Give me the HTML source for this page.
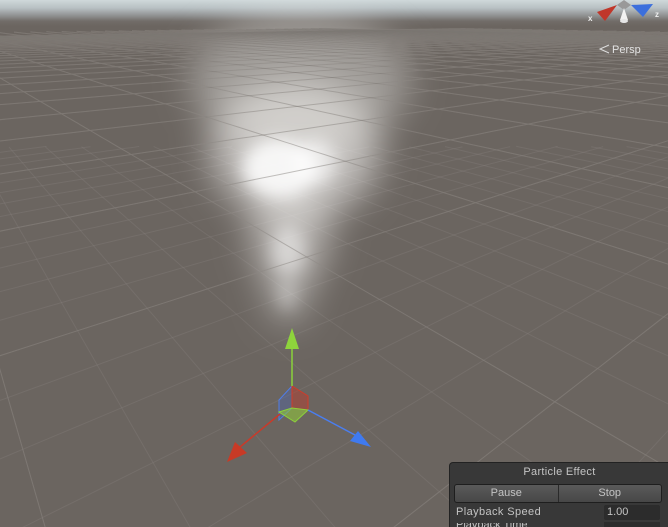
<!DOCTYPE html>
<html><head><meta charset="utf-8"><style>
html,body{margin:0;padding:0;width:668px;height:527px;overflow:hidden}
body{position:relative;background:#6b6560;font-family:"Liberation Sans",sans-serif}
#sky{position:absolute;left:0;top:0;width:668px;height:30px;background:linear-gradient(#cfd8da 0px,#b8c0c3 8px,#8e8f8f 16px,#726d69 21px,#6b6560 26px)}
svg{position:absolute;left:0;top:0}
#panel{position:absolute;left:449px;top:462px;width:219px;height:64px;overflow:hidden;background:#383838;border:1px solid #222;border-bottom:none;border-radius:4px 0 0 0;color:#c4c4c4;font-size:11px}
.title{position:absolute;left:0;width:219px;top:3px;text-align:center;letter-spacing:0.3px}
.btns{position:absolute;left:4px;top:21px;width:206px;height:17px;border:1px solid #1e1e1e;border-radius:3px;background:linear-gradient(#5a5a5a,#474747);display:flex}
.btns div{flex:1;text-align:center;line-height:17px}
.btns div+div{border-left:1px solid #2a2a2a}
.lab{position:absolute;left:6px;top:43px;letter-spacing:0.4px}
.fld{position:absolute;left:154px;top:42px;width:56px;height:15px;background:#2c2c2c;line-height:15px;padding-left:3px;box-sizing:border-box;border-radius:2px}
.lab2{position:absolute;left:6px;top:60px;line-height:4px;height:4px;overflow:hidden}
.fld2{position:absolute;left:154px;top:59px;width:56px;height:5px;background:#2c2c2c}
</style></head><body>
<div id="sky"></div>
<svg width="668" height="527">
<defs>
<filter id="b1" x="-50%" y="-50%" width="200%" height="200%"><feGaussianBlur stdDeviation="18"/></filter>
<filter id="b2" x="-50%" y="-50%" width="200%" height="200%"><feGaussianBlur stdDeviation="8"/></filter>
<radialGradient id="sky2" cx="0.5" cy="0" r="0.5"><stop offset="0" stop-color="#fff" stop-opacity="0.5"/><stop offset="1" stop-color="#fff" stop-opacity="0"/></radialGradient>
</defs>
<ellipse cx="330" cy="0" rx="200" ry="18" fill="url(#sky2)"/>
<g id="minor" fill="none" stroke="#8b8580" stroke-opacity="0.3" stroke-width="1"></g>
<g id="grid" fill="none" stroke="#8d8782" stroke-opacity="0.6" stroke-width="1"></g>
<g filter="url(#b1)" fill="#ecebe9">
<ellipse cx="300" cy="80" rx="110" ry="70" opacity="0.4"/>
<ellipse cx="295" cy="150" rx="85" ry="70" opacity="0.65"/>
<ellipse cx="290" cy="235" rx="40" ry="50" opacity="0.55"/>
<ellipse cx="288" cy="290" rx="22" ry="35" opacity="0.4"/>
</g>
<g filter="url(#b2)" fill="#ffffff">
<ellipse cx="280" cy="168" rx="38" ry="30" opacity="0.85"/>
<ellipse cx="315" cy="162" rx="22" ry="24" opacity="0.6"/>
<ellipse cx="288" cy="250" rx="17" ry="24" opacity="0.45"/>
<ellipse cx="287" cy="295" rx="10" ry="16" opacity="0.3"/>
</g>
<g id="grid2" fill="none" stroke="#7a7570" stroke-opacity="0.45" stroke-width="1"></g>
<g>
<polygon points="279,400 292,386 292,408 279,420" fill="#4a66b8" fill-opacity="0.35" stroke="#4f7de8" stroke-width="1"/>
<polygon points="292,386 308,396 308,410 292,408" fill="#c03a2a" fill-opacity="0.45" stroke="#d33a28" stroke-width="1"/>
<polygon points="279,412 292,408 308,410 295,422" fill="#8fc43c" fill-opacity="0.6" stroke="#8cd23a" stroke-width="1"/>
<line x1="292" y1="386" x2="292" y2="346" stroke="#8ad23a" stroke-width="1.5"/>
<polygon points="292,328 285,349 299,349" fill="#8ed43c"/>
<line x1="280" y1="414" x2="240" y2="447" stroke="#c93a2a" stroke-width="1.5"/>
<polygon points="227,462 235,442 247,453" fill="#c83a26"/>
<line x1="308" y1="410" x2="355" y2="435" stroke="#4a7ef0" stroke-width="1.5"/>
<polygon points="371,447 350,441 358,431" fill="#3f7af0"/>
</g>
<g>
<polygon points="617,5 597,12 605,21" fill="#c0372a"/>
<polygon points="617,5 624,0 631,5 624,10" fill="#999"/>
<polygon points="631,5 653,4 643,17" fill="#3c6fdc"/>
<polygon points="624,8 620,20 628,20" fill="#f2f2f2"/>
<ellipse cx="624" cy="21" rx="4" ry="2" fill="#e6e6e6"/>
<text x="588" y="21" font-size="8" font-weight="bold" fill="#eee" font-family="Liberation Sans">x</text>
<text x="655" y="17" font-size="8" font-weight="bold" fill="#eee" font-family="Liberation Sans">z</text>
<polyline points="609,45 600,49 609,53" fill="none" stroke="#ddd" stroke-width="1"/>
<text x="612" y="53" font-size="11" fill="#e2e2e2" font-family="Liberation Sans">Persp</text>
</g>
</svg>
<div id="panel">
<div class="title">Particle Effect</div>
<div class="btns"><div>Pause</div><div>Stop</div></div>
<div class="lab">Playback Speed</div>
<div class="fld">1.00</div>
<div class="lab2">Playback Time</div>
<div class="fld2"></div>
</div>
<script>
(function(){
var F=500,p=26*Math.PI/180,h=0.8,cx=334,cy=263,yaw=38*Math.PI/180;
var sp=Math.sin(p),cp=Math.cos(p),sy=Math.sin(yaw),cyw=Math.cos(yaw);
function proj(X,Z,maxd){var xp=X*cyw-Z*sy,zp=X*sy+Z*cyw;var d=h*sp+zp*cp;var u=-h*cp+zp*sp;if(d<0.1||d>maxd)return null;return [cx+F*xp/d,cy-F*u/d];}
function unproj(sx,sy2){var rx=(sx-cx)/F,ru=(cy-sy2)/F;var dy=ru*cp-sp,dz=ru*sp+cp;var t=h/-dy;var xp=t*rx,zp=t*dz;return [xp*cyw+zp*sy,-xp*sy+zp*cyw];}
var o=unproj(263,135);
function build(step,range,maxd,ds,skip){var out='';
for(var k=-range;k<=range;k++){
 if(skip&&k%skip==0)continue;
 for(var dir=0;dir<2;dir++){
  var pts=[];
  for(var s=-40;s<=40;s+=ds){
   var X=dir?o[0]+k*step:o[0]+s,Z=dir?o[1]+s:o[1]+k*step;var q=proj(X,Z,maxd);
   if(q&&q[0]>-50&&q[0]<720&&q[1]>22&&q[1]<580)pts.push(q[0].toFixed(1)+','+q[1].toFixed(1));
  }
  if(pts.length>1)out+='<polyline points="'+pts.join(' ')+'"/>';
 }
}return out;}
var major=build(1,30,1e9,0.1,0);
document.getElementById('grid').innerHTML=major;
document.getElementById('grid2').innerHTML=major;
document.getElementById('minor').innerHTML=build(0.2,40,3.5,0.03,5);
})();
</script>
</body></html>
